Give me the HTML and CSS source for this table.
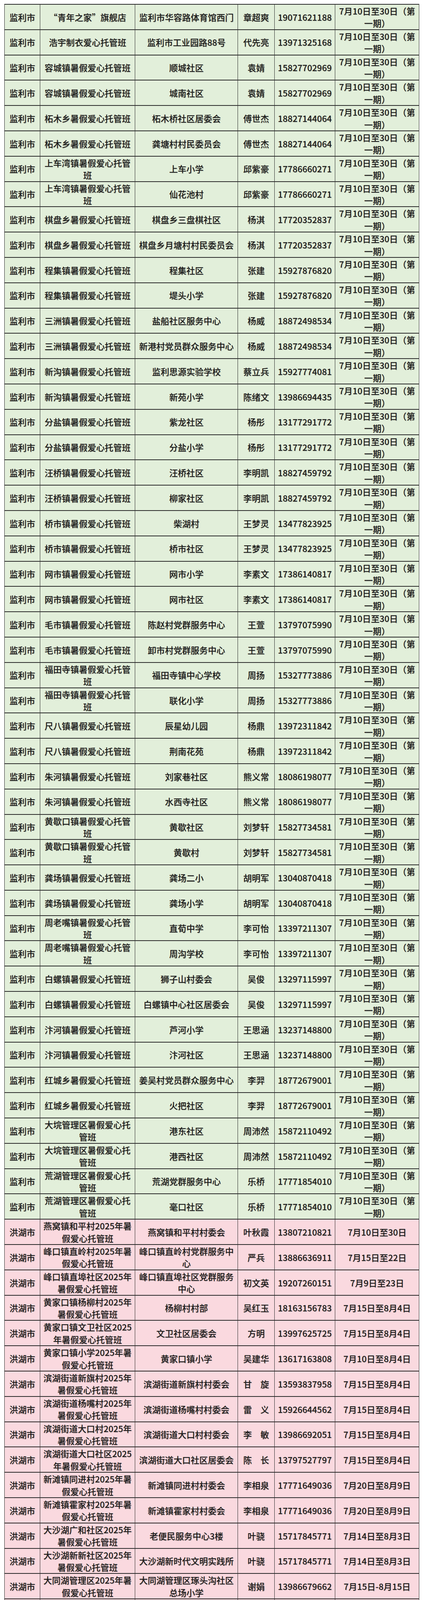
FILE: index.html
```html
<!DOCTYPE html>
<html lang="zh-CN">
<head>
<meta charset="utf-8">
<title>暑假爱心托管班</title>
<link rel="stylesheet" href="styles.css">
</head>
<body>
<div class="sheet">
<div class="row jl"><div>监利市</div><div>“青年之家”旗舰店</div><div>监利市华容路体育馆西门</div><div>章超爽</div><div>19071621188</div><div>7月10日至30日（第<br>一期）</div></div>
<div class="row jl"><div>监利市</div><div>浩宇制衣爱心托管班</div><div>监利市工业园路88号</div><div>代先亮</div><div>13971325168</div><div>7月10日至30日（第<br>一期）</div></div>
<div class="row jl"><div>监利市</div><div>容城镇暑假爱心托管班</div><div>顺城社区</div><div>袁婧</div><div>15827702969</div><div>7月10日至30日（第<br>一期）</div></div>
<div class="row jl"><div>监利市</div><div>容城镇暑假爱心托管班</div><div>城南社区</div><div>袁婧</div><div>15827702969</div><div>7月10日至30日（第<br>一期）</div></div>
<div class="row jl"><div>监利市</div><div>柘木乡暑假爱心托管班</div><div>柘木桥社区居委会</div><div>傅世杰</div><div>18827144064</div><div>7月10日至30日（第<br>一期）</div></div>
<div class="row jl"><div>监利市</div><div>柘木乡暑假爱心托管班</div><div>龚塘村村民委员会</div><div>傅世杰</div><div>18827144064</div><div>7月10日至30日（第<br>一期）</div></div>
<div class="row jl"><div>监利市</div><div>上车湾镇暑假爱心托管<br>班</div><div>上车小学</div><div>邱紫豪</div><div>17786660271</div><div>7月10日至30日（第<br>一期）</div></div>
<div class="row jl"><div>监利市</div><div>上车湾镇暑假爱心托管<br>班</div><div>仙花池村</div><div>邱紫豪</div><div>17786660271</div><div>7月10日至30日（第<br>一期）</div></div>
<div class="row jl"><div>监利市</div><div>棋盘乡暑假爱心托管班</div><div>棋盘乡三盘棋社区</div><div>杨淇</div><div>17720352837</div><div>7月10日至30日（第<br>一期）</div></div>
<div class="row jl"><div>监利市</div><div>棋盘乡暑假爱心托管班</div><div>棋盘乡月塘村村民委员会</div><div>杨淇</div><div>17720352837</div><div>7月10日至30日（第<br>一期）</div></div>
<div class="row jl"><div>监利市</div><div>程集镇暑假爱心托管班</div><div>程集社区</div><div>张建</div><div>15927876820</div><div>7月10日至30日（第<br>一期）</div></div>
<div class="row jl"><div>监利市</div><div>程集镇暑假爱心托管班</div><div>堤头小学</div><div>张建</div><div>15927876820</div><div>7月10日至30日（第<br>一期）</div></div>
<div class="row jl"><div>监利市</div><div>三洲镇暑假爱心托管班</div><div>盐船社区服务中心</div><div>杨威</div><div>18872498534</div><div>7月10日至30日（第<br>一期）</div></div>
<div class="row jl"><div>监利市</div><div>三洲镇暑假爱心托管班</div><div>新港村党员群众服务中心</div><div>杨威</div><div>18872498534</div><div>7月10日至30日（第<br>一期）</div></div>
<div class="row jl"><div>监利市</div><div>新沟镇暑假爱心托管班</div><div>监利思源实验学校</div><div>蔡立兵</div><div>15927774081</div><div>7月10日至30日（第<br>一期）</div></div>
<div class="row jl"><div>监利市</div><div>新沟镇暑假爱心托管班</div><div>新苑小学</div><div>陈绪文</div><div>13986694435</div><div>7月10日至30日（第<br>一期）</div></div>
<div class="row jl"><div>监利市</div><div>分盐镇暑假爱心托管班</div><div>紫龙社区</div><div>杨彤</div><div>13177291772</div><div>7月10日至30日（第<br>一期）</div></div>
<div class="row jl"><div>监利市</div><div>分盐镇暑假爱心托管班</div><div>分盐小学</div><div>杨彤</div><div>13177291772</div><div>7月10日至30日（第<br>一期）</div></div>
<div class="row jl"><div>监利市</div><div>汪桥镇暑假爱心托管班</div><div>汪桥社区</div><div>李明凯</div><div>18827459792</div><div>7月10日至30日（第<br>一期）</div></div>
<div class="row jl"><div>监利市</div><div>汪桥镇暑假爱心托管班</div><div>柳家社区</div><div>李明凯</div><div>18827459792</div><div>7月10日至30日（第<br>一期）</div></div>
<div class="row jl"><div>监利市</div><div>桥市镇暑假爱心托管班</div><div>柴湖村</div><div>王梦灵</div><div>13477823925</div><div>7月10日至30日（第<br>一期）</div></div>
<div class="row jl"><div>监利市</div><div>桥市镇暑假爱心托管班</div><div>桥市社区</div><div>王梦灵</div><div>13477823925</div><div>7月10日至30日（第<br>一期）</div></div>
<div class="row jl"><div>监利市</div><div>网市镇暑假爱心托管班</div><div>网市小学</div><div>李素文</div><div>17386140817</div><div>7月10日至30日（第<br>一期）</div></div>
<div class="row jl"><div>监利市</div><div>网市镇暑假爱心托管班</div><div>网市社区</div><div>李素文</div><div>17386140817</div><div>7月10日至30日（第<br>一期）</div></div>
<div class="row jl"><div>监利市</div><div>毛市镇暑假爱心托管班</div><div>陈赵村党群服务中心</div><div>王萱</div><div>13797075990</div><div>7月10日至30日（第<br>一期）</div></div>
<div class="row jl"><div>监利市</div><div>毛市镇暑假爱心托管班</div><div>卸市村党群服务中心</div><div>王萱</div><div>13797075990</div><div>7月10日至30日（第<br>一期）</div></div>
<div class="row jl"><div>监利市</div><div>福田寺镇暑假爱心托管<br>班</div><div>福田寺镇中心学校</div><div>周扬</div><div>15327773886</div><div>7月10日至30日（第<br>一期）</div></div>
<div class="row jl"><div>监利市</div><div>福田寺镇暑假爱心托管<br>班</div><div>联化小学</div><div>周扬</div><div>15327773886</div><div>7月10日至30日（第<br>一期）</div></div>
<div class="row jl"><div>监利市</div><div>尺八镇暑假爱心托管班</div><div>辰星幼儿园</div><div>杨鼎</div><div>13972311842</div><div>7月10日至30日（第<br>一期）</div></div>
<div class="row jl"><div>监利市</div><div>尺八镇暑假爱心托管班</div><div>荆南花苑</div><div>杨鼎</div><div>13972311842</div><div>7月10日至30日（第<br>一期）</div></div>
<div class="row jl"><div>监利市</div><div>朱河镇暑假爱心托管班</div><div>刘家巷社区</div><div>熊义常</div><div>18086198077</div><div>7月10日至30日（第<br>一期）</div></div>
<div class="row jl"><div>监利市</div><div>朱河镇暑假爱心托管班</div><div>水西寺社区</div><div>熊义常</div><div>18086198077</div><div>7月10日至30日（第<br>一期）</div></div>
<div class="row jl"><div>监利市</div><div>黄歇口镇暑假爱心托管<br>班</div><div>黄歇社区</div><div>刘梦轩</div><div>15827734581</div><div>7月10日至30日（第<br>一期）</div></div>
<div class="row jl"><div>监利市</div><div>黄歇口镇暑假爱心托管<br>班</div><div>黄歇村</div><div>刘梦轩</div><div>15827734581</div><div>7月10日至30日（第<br>一期）</div></div>
<div class="row jl"><div>监利市</div><div>龚场镇暑假爱心托管班</div><div>龚场二小</div><div>胡明军</div><div>13040870418</div><div>7月10日至30日（第<br>一期）</div></div>
<div class="row jl"><div>监利市</div><div>龚场镇暑假爱心托管班</div><div>龚场小学</div><div>胡明军</div><div>13040870418</div><div>7月10日至30日（第<br>一期）</div></div>
<div class="row jl"><div>监利市</div><div>周老嘴镇暑假爱心托管<br>班</div><div>直荀中学</div><div>李可怡</div><div>13397211307</div><div>7月10日至30日（第<br>一期）</div></div>
<div class="row jl"><div>监利市</div><div>周老嘴镇暑假爱心托管<br>班</div><div>周沟学校</div><div>李可怡</div><div>13397211307</div><div>7月10日至30日（第<br>一期）</div></div>
<div class="row jl"><div>监利市</div><div>白螺镇暑假爱心托管班</div><div>狮子山村委会</div><div>吴俊</div><div>13297115997</div><div>7月10日至30日（第<br>一期）</div></div>
<div class="row jl"><div>监利市</div><div>白螺镇暑假爱心托管班</div><div>白螺镇中心社区居委会</div><div>吴俊</div><div>13297115997</div><div>7月10日至30日（第<br>一期）</div></div>
<div class="row jl"><div>监利市</div><div>汴河镇暑假爱心托管班</div><div>芦河小学</div><div>王思涵</div><div>13237148800</div><div>7月10日至30日（第<br>一期）</div></div>
<div class="row jl"><div>监利市</div><div>汴河镇暑假爱心托管班</div><div>汴河社区</div><div>王思涵</div><div>13237148800</div><div>7月10日至30日（第<br>一期）</div></div>
<div class="row jl"><div>监利市</div><div>红城乡暑假爱心托管班</div><div>姜吴村党员群众服务中心</div><div>李羿</div><div>18772679001</div><div>7月10日至30日（第<br>一期）</div></div>
<div class="row jl"><div>监利市</div><div>红城乡暑假爱心托管班</div><div>火把社区</div><div>李羿</div><div>18772679001</div><div>7月10日至30日（第<br>一期）</div></div>
<div class="row jl"><div>监利市</div><div>大垸管理区暑假爱心托<br>管班</div><div>港东社区</div><div>周沛然</div><div>15872110492</div><div>7月10日至30日（第<br>一期）</div></div>
<div class="row jl"><div>监利市</div><div>大垸管理区暑假爱心托<br>管班</div><div>港西社区</div><div>周沛然</div><div>15872110492</div><div>7月10日至30日（第<br>一期）</div></div>
<div class="row jl"><div>监利市</div><div>荒湖管理区暑假爱心托<br>管班</div><div>荒湖党群服务中心</div><div>乐桥</div><div>17771854010</div><div>7月10日至30日（第<br>一期）</div></div>
<div class="row jl"><div>监利市</div><div>荒湖管理区暑假爱心托<br>管班</div><div>毫口社区</div><div>乐桥</div><div>17771854010</div><div>7月10日至30日（第<br>一期）</div></div>
<div class="row hh"><div>洪湖市</div><div>燕窝镇和平村2025年暑<br>假爱心托管班</div><div>燕窝镇和平村村委会</div><div>叶秋霞</div><div>13807210821</div><div>7月10日至30日</div></div>
<div class="row hh"><div>洪湖市</div><div>峰口镇直岭村2025年暑<br>假爱心托管班</div><div>峰口镇直岭村党群服务中<br>心</div><div>严兵</div><div>13886636911</div><div>7月15日至22日</div></div>
<div class="row hh"><div>洪湖市</div><div>峰口镇直埠社区2025年<br>暑假爱心托管班</div><div>峰口镇直埠社区党群服务<br>中心</div><div>初文英</div><div>19207260151</div><div>7月9日至23日</div></div>
<div class="row hh"><div>洪湖市</div><div>黄家口镇杨柳村2025年<br>暑假爱心托管班</div><div>杨柳村村部</div><div>吴红玉</div><div>18163156783</div><div>7月15日至8月4日</div></div>
<div class="row hh"><div>洪湖市</div><div>黄家口镇文卫社区2025<br>年暑假爱心托管班</div><div>文卫社区居委会</div><div>方明</div><div>13997625725</div><div>7月15日至8月4日</div></div>
<div class="row hh"><div>洪湖市</div><div>黄家口镇小学2025年暑<br>假爱心托管班</div><div>黄家口镇小学</div><div>吴建华</div><div>13617163808</div><div>7月10日至8月4日</div></div>
<div class="row hh"><div>洪湖市</div><div>滨湖街道新旗村2025年<br>暑假爱心托管班</div><div>滨湖街道新旗村村委会</div><div>甘　旋</div><div>13593837958</div><div>7月15日至8月4日</div></div>
<div class="row hh"><div>洪湖市</div><div>滨湖街道杨嘴村2025年<br>暑假爱心托管班</div><div>滨湖街道杨嘴村村委会</div><div>雷　义</div><div>15926644562</div><div>7月15日至8月4日</div></div>
<div class="row hh"><div>洪湖市</div><div>滨湖街道大口村2025年<br>暑假爱心托管班</div><div>滨湖街道大口村村委会</div><div>李　敏</div><div>13986692051</div><div>7月15日至8月4日</div></div>
<div class="row hh"><div>洪湖市</div><div>滨湖街道大口社区2025<br>年暑假爱心托管班</div><div>滨湖街道大口社区居委会</div><div>陈　长</div><div>13797527797</div><div>7月15日至8月4日</div></div>
<div class="row hh"><div>洪湖市</div><div>新滩镇同进村2025年暑<br>假爱心托管班</div><div>新滩镇同进村村委会</div><div>李相泉</div><div>17771649036</div><div>7月20日至8月9日</div></div>
<div class="row hh"><div>洪湖市</div><div>新滩镇霍家村2025年暑<br>假爱心托管班</div><div>新滩镇霍家村村委会</div><div>李相泉</div><div>17771649036</div><div>7月20日至8月9日</div></div>
<div class="row hh"><div>洪湖市</div><div>大沙湖广和社区2025年<br>暑假爱心托管班</div><div>老便民服务中心3楼</div><div>叶骁</div><div>15717845771</div><div>7月14日至8月3日</div></div>
<div class="row hh"><div>洪湖市</div><div>大沙湖新新社区2025年<br>暑假爱心托管班</div><div>大沙湖新时代文明实践所</div><div>叶骁</div><div>15717845771</div><div>7月14日至8月3日</div></div>
<div class="row hh"><div>洪湖市</div><div>大同湖管理区2025年暑<br>假爱心托管班</div><div>大同湖管理区琢头沟社区<br>总场小学</div><div>谢娟</div><div>13986679662</div><div>7月15日-8月15日</div></div>
<div class="row hh"><div>洪湖市</div><div>大同湖管理区农艺社区<br>2025年暑假爱心托管班</div><div>大同湖管理区农艺社区居<br>委会</div><div>李瑞</div><div>15926577008</div><div>7月15日-8月15日</div></div>
<div class="row hh"><div>洪湖市</div><div>龙口镇三红村2025年暑<br>假爱心托管班</div><div>龙口镇三红村</div><div>张涛</div><div>13437212496</div><div>7月10日至8月5日</div></div>
<div class="row hh"><div>洪湖市</div><div>龙口镇傍湖村2025年暑<br>假爱心托管班</div><div>龙口镇傍湖村</div><div>杜衡方</div><div>13593855626</div><div>7月10日至8月5日</div></div>
<div class="row hh"><div>洪湖市</div><div>老湾回族乡江豚湾社区<br>2025年暑假爱心托管班</div><div>老湾回族乡江豚湾社区</div><div>刘平</div><div>15090815091</div><div>7月15日-8月15日</div></div>
<div class="row hh"><div>洪湖市</div><div>老湾回族乡沙洲村2025<br>年暑假爱心托管班</div><div>老湾回族乡沙洲村</div><div>刘少华</div><div>13797322604</div><div>7月15日-8月15日</div></div>
<div class="row hh"><div>洪湖市</div><div>乌林镇香山村2025年暑<br>假爱心托管班</div><div>香山村村委会</div><div>徐生华</div><div>13872210641</div><div>7月10日至7月30日</div></div>
<div class="row hh"><div>洪湖市</div><div>乌林镇王家洲村2025年<br>暑假爱心托管班</div><div>王家洲村村委会</div><div>王茂华</div><div>13177024120</div><div>7月10日至30日</div></div>
<div class="row hh"><div>洪湖市</div><div>乌林镇水府村2025年暑<br>假爱心托管班</div><div>水府村村委会</div><div>万向阳</div><div>15629822666</div><div>7月10日至30日</div></div>
<div class="row hh"><div>洪湖市</div><div>螺山镇新联村2025年暑<br>假爱心托管班</div><div>洪湖市螺山镇新联村</div><div>刘华新</div><div>18163156579</div><div>8月5日至25日</div></div>
<div class="row hh"><div>洪湖市</div><div>螺山镇复兴村2025年暑<br>假爱心托管班</div><div>洪湖市螺山镇复兴村</div><div>李先娥</div><div>18772639303</div><div>8月5日至25日</div></div>
<div class="row hh"><div>洪湖市</div><div>螺山镇螺山村2025年暑<br>假爱心托管班</div><div>螺山镇螺山村</div><div>刘华</div><div>18163156561</div><div>7月10日至29日</div></div>
<div class="row hh"><div>洪湖市</div><div>开发区河岭村2025年暑<br>假爱心托管班</div><div>开发区河岭村二组</div><div>戚红嫣</div><div>15971612550</div><div>7月10日至30日</div></div>
<div class="row hh"><div>洪湖市</div><div>小港管理区港东社区<br>2025年暑假爱心托管班</div><div>洪湖市小港管理区港东社<br>区党群服务中心</div><div>郭毅</div><div>13972350295</div><div>8月5日至25日</div></div>
<div class="row hh"><div>洪湖市</div><div>万全镇永丰村2025年暑<br>假爱心托管班</div><div>永丰村党员群众服务中心</div><div>王永权</div><div>13997578004</div><div>7月10日至30日</div></div>
<div class="row hh"><div>洪湖市</div><div>万全镇万全社区2025年<br>暑假爱心托管班</div><div>万全社区党员群众服务中<br>心</div><div>陈泉芝</div><div>15927723980</div><div>8月5日至25日</div></div>
<div class="row hh"><div>洪湖市</div><div>曹市镇武场村暑假爱心<br>托管班</div><div>曹市镇武场村村民委员会</div><div>黄丽</div><div>18163156923</div><div>7月10日至30日</div></div>
<div class="row hh"><div>洪湖市</div><div>曹市镇胜利村暑假爱心<br>托管班</div><div>曹市镇胜利村村民委员会</div><div>李功英</div><div>18163156887</div><div>7月10日至30日</div></div>
<div class="row hh"><div>洪湖市</div><div>府场社区2025年暑假爱<br>心托管班</div><div>府场镇府场社区</div><div>易远</div><div>15090736969</div><div>7月24至8月13日</div></div>
<div class="row hh"><div>洪湖市</div><div>戴家场镇河坝村2025年<br>暑假爱心托管班</div><div>戴家场镇河坝村村委会</div><div>郭卫红</div><div>13997561009</div><div>7月10日至30日</div></div>
<div class="row hh"><div>洪湖市</div><div>戴家场镇机关2025年暑<br>假爱心托管班</div><div>戴家场镇人民政府</div><div>胡峥</div><div>18772591182</div><div>7月10日至30日</div></div>
<div class="row hh"><div>洪湖市</div><div>戴家场镇柴林村村2025<br>年暑假爱心托管班</div><div>戴家场镇柴林村</div><div>陈家政</div><div>13797361930</div><div>7月10日至30日</div></div>
<div class="row hh"><div>洪湖市</div><div>瞿家湾社区2025年暑假<br>爱心托管班</div><div>瞿家湾唐城大道</div><div>黎为清</div><div>15090753802</div><div>7月10日至30日</div></div>
<div class="row hh"><div>洪湖市</div><div>瞿家湾村2025年暑假爱<br>心托管班</div><div>瞿家湾村民委员会</div><div>陈玲</div><div>15827792567</div><div>7月10日至30日</div></div>
<div class="row hh"><div>洪湖市</div><div>洪湖市新华书店2025年<br>暑假爱心托管班</div><div>洪湖市新堤街道赤卫路<br>32-5号</div><div>李春训</div><div>15972743001</div><div>7月7日至18日，8月4<br>日至8日15日</div></div>
<div class="row hh"><div>洪湖市</div><div>汉河镇应南村2025年暑<br>假爱心托管班</div><div>汉河镇应南村村民委员会</div><div>金旭文</div><div>15897730033</div><div>7月10日至30日</div></div>
<div class="row hh"><div>洪湖市</div><div>汉河镇西池村2025年暑<br>假爱心托管班</div><div>汉河镇西池村村民委员会</div><div>金旭文</div><div>15897730033</div><div>7月10日至30日</div></div>
<div class="row hh"><div>洪湖市</div><div>新堤街道春雨亭社区<br>2025年暑假爱心托管班</div><div>新堤街道春雨亭路88号</div><div>杨云霞</div><div>13886562968</div><div>7月14日至8月15日</div></div>
<div class="row hh"><div>洪湖市</div><div>新堤街道洪林村<br>2025年暑假爱心托管班</div><div>洪林村党群服务中心(村委<br>会)</div><div>卢烁</div><div>13797337737</div><div>7月20日至8月15日</div></div>
<div class="row hh"><div>洪湖市</div><div>沙口镇刘桥村<br>2025年暑假爱心托管班</div><div>沙口镇刘桥村</div><div>程美英</div><div>13264676555</div><div>7月5日至8月15日</div></div>
<div class="row hh"><div>洪湖市</div><div>新堤街道新闸村2025年<br>暑假爱心托管班</div><div>新堤街道新闸村</div><div>李芳</div><div>13872218805</div><div>7月5日至25日</div></div>
</div>
</body>
</html>
```

FILE: styles.css
```css
html, body {
  margin: 0;
  padding: 0;
  background: #ffffff;
}

body {
  padding: 10px 7px 9px 11px;
  font-family: "Noto Sans CJK SC", "Noto Sans", sans-serif;
}

.sheet {
  display: grid;
  grid-template-columns: 90px 242px 262px 93px 154px 214px;
  grid-auto-rows: 62.8px;
  column-gap: 1px;
  row-gap: 2px;
  padding: 2px 1px;
  width: max-content;
  background: #2c2c2c;
}

.row {
  display: contents;
}

.row > div {
  display: flex;
  align-items: center;
  justify-content: center;
  text-align: center;
  font-size: 22px;
  font-weight: 500;
  line-height: 31.4px;
  color: #1c1c1c;
  white-space: nowrap;
  overflow: hidden;
  text-shadow: 0.8px 0.8px 1px rgba(0, 0, 0, 0.28);
}

.jl > div {
  background: #e2efda;
}

.hh > div {
  background: #fad9df;
}
```
